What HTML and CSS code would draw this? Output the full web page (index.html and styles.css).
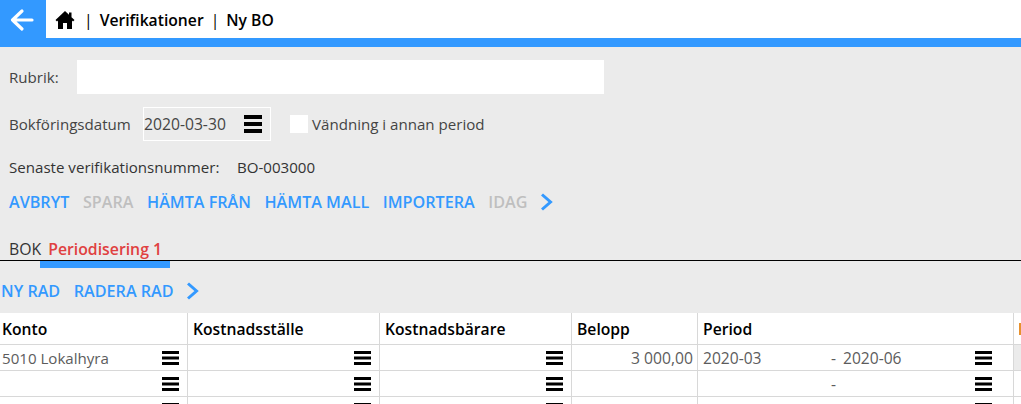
FILE: index.html
```html
<!DOCTYPE html>
<html lang="en">
<head>
    <meta charset="UTF-8">
    <title>Verifikationer - Ny BO</title>
    <link rel="stylesheet" href="styles.css">
</head>
<body>
<div class="topbar">
    <a class="back-button">
        <svg width="24" height="24" viewBox="0 0 24 24"><path d="M12 3 L2.5 12 L12 21 M2.5 12 H22" fill="none" stroke="#fff" stroke-width="3.2" stroke-linecap="round" stroke-linejoin="round"/></svg>
    </a>
    <div class="crumbs">
        <svg class="home-icon" width="20" height="19" viewBox="0 0 20 19"><path d="M10 1 L0.5 10 L2 11.5 L3 10.6 V19 H8 V13 H12 V19 H17 V10.6 L18 11.5 L19.5 10 L16.5 7.2 V2.5 H14 V4.8 Z" fill="#000"/></svg>
        <span class="sep">|</span>
        <span>Verifikationer</span>
        <span class="sep">|</span>
        <span>Ny BO</span>
    </div>
</div>

<div class="form">
    <div class="row-title">
        <label class="title-label">Rubrik:</label>
        <div class="title-input"></div>
    </div>
    <div class="row-date">
        <label class="date-label">Bokföringsdatum</label>
        <div class="date-box">
            <span>2020-03-30</span>
            <svg width="18" height="18" viewBox="0 0 18 18"><path d="M0 0H18V4H0ZM0 7H18V11H0ZM0 14H18V18H0Z" fill="#000"/></svg>
        </div>
        <div class="check-box"></div>
        <span class="check-label">Vändning i annan period</span>
    </div>
    <div class="row-last">
        <span class="last-label">Senaste verifikationsnummer:</span>
        <span>BO-003000</span>
    </div>
    <div class="actions">
        <a class="action">AVBRYT</a>
        <a class="action disabled">SPARA</a>
        <a class="action">HÄMTA FRÅN</a>
        <a class="action">HÄMTA MALL</a>
        <a class="action">IMPORTERA</a>
        <a class="action disabled">IDAG</a>
        <svg class="chevron" width="13" height="18" viewBox="0 0 13 18"><path d="M2 1.5 L10.5 9 L2 16.5" fill="none" stroke="#3399ff" stroke-width="3"/></svg>
    </div>
</div>

<div class="tabs">
    <span class="tab">BOK</span>
    <span class="tab tab-active">Periodisering 1</span>
</div>

<div class="actions row-actions">
    <a class="action">NY RAD</a>
    <a class="action">RADERA RAD</a>
    <svg class="chevron" width="13" height="18" viewBox="0 0 13 18"><path d="M2 1.5 L10.5 9 L2 16.5" fill="none" stroke="#3399ff" stroke-width="3"/></svg>
</div>

<div class="grid">
    <div class="cell head">Konto</div>
    <div class="cell head">Kostnadsställe</div>
    <div class="cell head">Kostnadsbärare</div>
    <div class="cell head">Belopp</div>
    <div class="cell head">Period</div>
    <div class="cell head last"><span class="orange-mark"></span></div>

    <div class="cell first">5010 Lokalhyra<svg class="menu" viewBox="0 0 17 14"><path d="M0 0H17V3H0ZM0 5.5H17V8.5H0ZM0 11H17V14H0Z"/></svg></div>
    <div class="cell"><svg class="menu" viewBox="0 0 17 14"><path d="M0 0H17V3H0ZM0 5.5H17V8.5H0ZM0 11H17V14H0Z"/></svg></div>
    <div class="cell"><svg class="menu" viewBox="0 0 17 14"><path d="M0 0H17V3H0ZM0 5.5H17V8.5H0ZM0 11H17V14H0Z"/></svg></div>
    <div class="cell amount">3 000,00</div>
    <div class="cell period"><span class="from">2020-03</span><span class="dash">-</span><span class="to">2020-06</span><svg class="menu" viewBox="0 0 17 14"><path d="M0 0H17V3H0ZM0 5.5H17V8.5H0ZM0 11H17V14H0Z"/></svg></div>
    <div class="cell last shaded"></div>

    <div class="cell"><svg class="menu" viewBox="0 0 17 14"><path d="M0 0H17V3H0ZM0 5.5H17V8.5H0ZM0 11H17V14H0Z"/></svg></div>
    <div class="cell"><svg class="menu" viewBox="0 0 17 14"><path d="M0 0H17V3H0ZM0 5.5H17V8.5H0ZM0 11H17V14H0Z"/></svg></div>
    <div class="cell"><svg class="menu" viewBox="0 0 17 14"><path d="M0 0H17V3H0ZM0 5.5H17V8.5H0ZM0 11H17V14H0Z"/></svg></div>
    <div class="cell amount"></div>
    <div class="cell period"><span class="from"></span><span class="dash">-</span><span class="to"></span><svg class="menu" viewBox="0 0 17 14"><path d="M0 0H17V3H0ZM0 5.5H17V8.5H0ZM0 11H17V14H0Z"/></svg></div>
    <div class="cell last"></div>

    <div class="cell"><svg class="menu" viewBox="0 0 17 14"><path d="M0 0H17V3H0ZM0 5.5H17V8.5H0ZM0 11H17V14H0Z"/></svg></div>
    <div class="cell"><svg class="menu" viewBox="0 0 17 14"><path d="M0 0H17V3H0ZM0 5.5H17V8.5H0ZM0 11H17V14H0Z"/></svg></div>
    <div class="cell"><svg class="menu" viewBox="0 0 17 14"><path d="M0 0H17V3H0ZM0 5.5H17V8.5H0ZM0 11H17V14H0Z"/></svg></div>
    <div class="cell amount"></div>
    <div class="cell period"><span class="from"></span><span class="dash"></span><span class="to"></span><svg class="menu" viewBox="0 0 17 14"><path d="M0 0H17V3H0ZM0 5.5H17V8.5H0ZM0 11H17V14H0Z"/></svg></div>
    <div class="cell last"></div>
</div>
</body>
</html>
```

FILE: styles.css
```css
html, body {
    height: 100%;
}

body {
    margin: 0;
    height: 404px;
    overflow: hidden;
    background-color: #ebebeb;
    font-family: "Open Sans", sans-serif;
    font-size: 15.1px;
    color: #444;
}

.topbar {
    display: flex;
    height: 38px;
    background-color: #fff;
    border-bottom: 9px solid #3399ff;
}

.back-button {
    display: flex;
    align-items: center;
    justify-content: center;
    width: 46px;
    height: 47px;
    padding-bottom: 8px;
    padding-right: 2px;
    box-sizing: border-box;
    background-color: #3399ff;
}

.crumbs {
    display: flex;
    align-items: center;
    gap: 7px;
    padding: 1px 0 0 9px;
    font-weight: 600;
    font-size: 15.7px;
    color: #000;
}

.sep {
    font-weight: 400;
    color: #000;
}

.home-icon {
    margin-right: 2px;
}

.form {
    padding: 13px 0 0 9px;
}

.row-title {
    display: flex;
    align-items: center;
    height: 34px;
}

.title-label {
    width: 68px;
}

.title-input {
    width: 527px;
    height: 34px;
    background-color: #fff;
}

.row-date {
    display: flex;
    align-items: center;
    height: 34px;
    margin-top: 13px;
}

.date-label {
    width: 134px;
}

.date-box {
    display: flex;
    align-items: center;
    justify-content: space-between;
    box-sizing: border-box;
    width: 128px;
    height: 34px;
    padding: 0 8px 0 0;
    border: 1px solid #fff;
    font-size: 15.7px;
}

.check-box {
    width: 18px;
    height: 18px;
    margin-left: 19px;
    background-color: #fff;
}

.check-label {
    margin-left: 4px;
}

.row-last {
    display: flex;
    margin-top: 16px;
    color: #333;
}

.last-label {
    width: 228px;
}

.actions {
    display: flex;
    align-items: center;
    gap: 13.6px;
    margin-top: 14px;
    font-weight: 600;
    font-size: 16.15px;
}

.action {
    color: #3399ff;
}

.action.disabled {
    color: #bfbfbf;
}

.chevron {
    margin-left: -1px;
}

.tabs {
    display: flex;
    gap: 7px;
    height: 29px;
    margin-top: 19px;
    padding: 6px 0 0 9px;
    box-sizing: border-box;
    border-bottom: 1px solid #000;
    font-size: 15.8px;
    line-height: 22px;
    color: #333;
}

.tab-active {
    position: relative;
    font-weight: 600;
    color: #e04040;
}

.tab-active::after {
    content: "";
    position: absolute;
    left: -8px;
    right: -8px;
    top: 23px;
    height: 7px;
    background-color: #3399ff;
}

.row-actions {
    margin-top: 19px;
    padding-left: 1px;
}

.grid {
    display: grid;
    grid-template-columns: 188px 192px 192px 126px 316px 7px;
    grid-template-rows: 32px 26px 26px 26px;
    margin-top: 11px;
    background-color: #fff;
}

.cell {
    position: relative;
    display: flex;
    align-items: center;
    box-sizing: border-box;
    padding-left: 2px;
    border-right: 1px solid #d8d8d8;
    border-bottom: 1px solid #d8d8d8;
    color: #5c5c5c;
    white-space: nowrap;
}

.head {
    padding-left: 5px;
    font-size: 15.7px;
    font-weight: 600;
    color: #000;
}

.grid .head:first-child {
    padding-left: 2px;
}

.last {
    border-right: none;
}

.shaded {
    background-color: #ebebeb;
}

.orange-mark {
    width: 2px;
    height: 12px;
    background-color: #e8912d;
}

.menu {
    flex-shrink: 0;
    width: 17px;
    height: 14px;
    margin-left: auto;
    margin-right: 8px;
    fill: #000;
}

.amount {
    justify-content: flex-end;
    padding-right: 4px;
    font-size: 15.7px;
}

.period {
    padding-left: 5px;
    font-size: 15.6px;
}

.period .menu {
    margin-right: 21px;
}

.from {
    width: 128px;
}

.dash {
    width: 12px;
}

.to {
    width: 130px;
}
```
